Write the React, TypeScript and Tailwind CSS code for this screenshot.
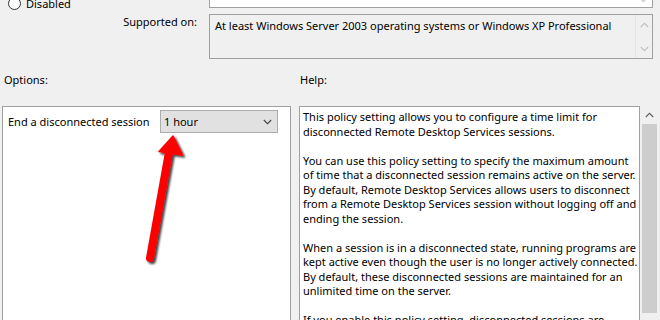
import React from "react";

const helpLines = [
  "This policy setting allows you to configure a time limit for",
  "disconnected Remote Desktop Services sessions.",
  "",
  "You can use this policy setting to specify the maximum amount",
  "of time that a disconnected session remains active on the server.",
  "By default, Remote Desktop Services allows users to disconnect",
  "from a Remote Desktop Services session without logging off and",
  "ending the session.",
  "",
  "When a session is in a disconnected state, running programs are",
  "kept active even though the user is no longer actively connected.",
  "By default, these disconnected sessions are maintained for an",
  "unlimited time on the server.",
  "",
  "If you enable this policy setting, disconnected sessions are",
];

function Chevron({ up, color, className }: { up?: boolean; color: string; className?: string }) {
  return (
    <svg width="9" height="6" viewBox="0 0 9 6" className={className}>
      <path
        d={up ? "M0.8 5 L4.5 1.3 L8.2 5" : "M0.8 1 L4.5 4.7 L8.2 1"}
        fill="none"
        stroke={color}
        strokeWidth="1.1"
      />
    </svg>
  );
}

export default function App() {
  return (
    <div
      className="relative w-[660px] h-[320px] overflow-hidden bg-[#f0f0f0] text-[11px] leading-[15px] text-black"
      style={{ fontFamily: '"Noto Sans", "Open Sans", sans-serif' }}
    >
      {/* top row (cut off) */}
      <div className="flex h-[8px] items-end">
        <div className="w-[209px] self-start flex items-center h-[14px] -mt-[4px] pl-[8px] gap-[5px]">
          <div className="w-[13px] h-[13px] rounded-full border border-[#333] bg-white shrink-0" />
          <span>Disabled</span>
        </div>
        <div className="w-[444px] h-[24px] shrink-0 border border-[#a0a0a0] bg-white flex justify-end">
          <div className="w-[17px] h-full flex flex-col justify-end items-center pb-[4px]">
            <Chevron color="#c8c8c8" />
          </div>
        </div>
      </div>

      {/* supported on */}
      <div className="flex mt-[6px] h-[45px]">
        <div className="w-[209px] pr-[12px] text-right">Supported on:</div>
        <div className="w-[444px] h-full border border-[#a0a0a0] bg-[#f0f0f0] flex">
          <div className="flex-1 pl-[5px] pt-[3px] whitespace-nowrap">
            At least Windows Server 2003 operating systems or Windows XP Professional
          </div>
          <div className="w-[17px] h-full border-l border-[#e4e4e4] flex flex-col items-center justify-between pt-[7px] pb-[6px]">
            <Chevron up color="#c0c0c0" />
            <Chevron color="#c0c0c0" />
          </div>
        </div>
      </div>

      {/* labels */}
      <div className="flex mt-[13px] h-[15px]">
        <div className="w-[300px] pl-[4px]">Options:</div>
        <div>Help:</div>
      </div>

      {/* panels */}
      <div className="flex mt-[19px] pl-[2px] h-[230px]">
        <div className="w-[289px] h-full border border-[#a0a0a0] bg-white pt-[3px]">
          <div className="flex items-center">
            <div className="w-[157px] pl-[5px] whitespace-nowrap">End a disconnected session</div>
            <div className="w-[118px] h-[23px] border border-[#adadad] bg-[#e1e1e1] flex items-center justify-between pl-[3px] pr-[5px]">
              <span>1 hour</span>
              <Chevron color="#444" />
            </div>
          </div>
        </div>
        <div className="w-[341px] ml-[8px] h-full border border-[#a0a0a0] bg-white pt-[3px] pl-[3px] whitespace-nowrap leading-[14.5px]">
          {helpLines.map((l, i) => (
            <div key={i} className="h-[14.5px]">
              {l}
            </div>
          ))}
        </div>
        <div className="w-[18px] h-full flex flex-col items-center pt-[6px]">
          <Chevron up color="#606060" />
          <div className="mt-[6px] w-[15px] h-[189px] bg-[#cdcdcd]" />
        </div>
      </div>

      {/* red arrow overlay */}
      <svg
        className="absolute left-0 top-0 pointer-events-none"
        width="660"
        height="320"
        viewBox="0 0 660 320"
      >
        <defs>
          <filter id="sh" x="-50%" y="-50%" width="200%" height="200%">
            <feDropShadow dx="2" dy="2" stdDeviation="1.3" floodColor="#000" floodOpacity="0.75" />
          </filter>
        </defs>
        <g filter="url(#sh)">
          <line x1="150" y1="258" x2="169" y2="152" stroke="#ff0000" strokeWidth="8" strokeLinecap="round" />
          <path d="M173 136 L182.5 155 L159 151.5 Z" fill="#ff0000" stroke="#ff0000" strokeWidth="1.5" strokeLinejoin="round" />
        </g>
      </svg>
    </div>
  );
}
